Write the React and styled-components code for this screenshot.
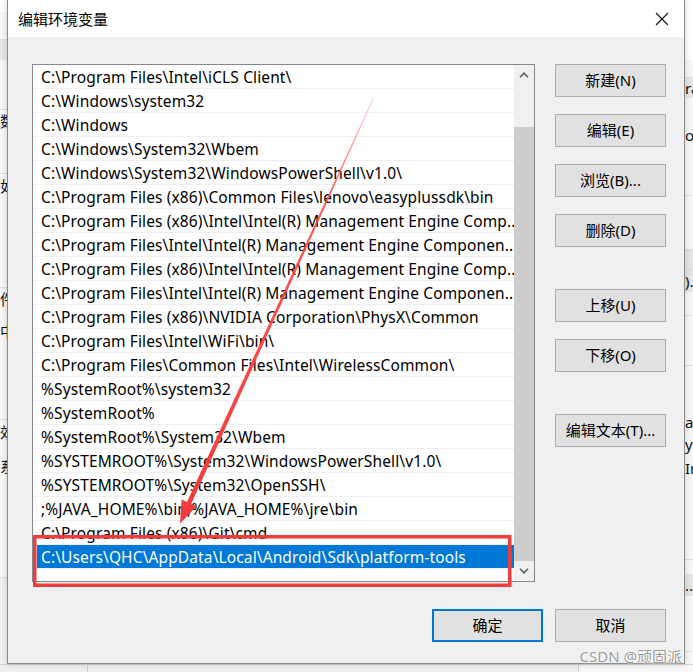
import React from "react";
import styled, { createGlobalStyle } from "styled-components";

const GlobalStyle = createGlobalStyle`
  html, body {
    margin: 0;
    padding: 0;
    background: #f0f0f0;
  }
  body {
    font-family: "Noto Sans", "Noto Sans CJK SC", sans-serif;
    font-size: 15px;
    color: #000;
  }
`;

const paths = [
  "C:\\Program Files\\Intel\\iCLS Client\\",
  "C:\\Windows\\system32",
  "C:\\Windows",
  "C:\\Windows\\System32\\Wbem",
  "C:\\Windows\\System32\\WindowsPowerShell\\v1.0\\",
  "C:\\Program Files (x86)\\Common Files\\lenovo\\easyplussdk\\bin",
  "C:\\Program Files (x86)\\Intel\\Intel(R) Management Engine Comp...",
  "C:\\Program Files\\Intel\\Intel(R) Management Engine Componen...",
  "C:\\Program Files (x86)\\Intel\\Intel(R) Management Engine Comp...",
  "C:\\Program Files\\Intel\\Intel(R) Management Engine Componen...",
  "C:\\Program Files (x86)\\NVIDIA Corporation\\PhysX\\Common",
  "C:\\Program Files\\Intel\\WiFi\\bin\\",
  "C:\\Program Files\\Common Files\\Intel\\WirelessCommon\\",
  "%SystemRoot%\\system32",
  "%SystemRoot%",
  "%SystemRoot%\\System32\\Wbem",
  "%SYSTEMROOT%\\System32\\WindowsPowerShell\\v1.0\\",
  "%SYSTEMROOT%\\System32\\OpenSSH\\",
  ";%JAVA_HOME%\\bin;%JAVA_HOME%\\jre\\bin",
  "C:\\Program Files (x86)\\Git\\cmd",
  "C:\\Users\\QHC\\AppData\\Local\\Android\\Sdk\\platform-tools",
];
const selectedIndex = 20;

const sideButtons = [
  { label: "新建(N)" },
  { label: "编辑(E)" },
  { label: "浏览(B)..." },
  { label: "删除(D)" },
  { label: "上移(U)", group: true },
  { label: "下移(O)" },
  { label: "编辑文本(T)...", group: true },
];

// bits of the window behind the dialog that peek out at the edges
const leftBits = [
  { h: 12, bg: "#ffffff" },
  { h: 28, bg: "#f7f7f7", line: true },
  { h: 20, bg: "#e6e6e6", text: "±" },
  { h: 50, bg: "#f7f7f7", line: true },
  { h: 22, bg: "#f7f7f7", text: "数" },
  { h: 42, bg: "#f7f7f7", line: true },
  { h: 24, bg: "#f7f7f7", text: "如" },
  { h: 90, bg: "#f7f7f7", line: true },
  { h: 22, bg: "#f7f7f7", text: "件" },
  { h: 10, bg: "#f7f7f7" },
  { h: 22, bg: "#f7f7f7", text: "中" },
  { h: 78, bg: "#f7f7f7", line: true },
  { h: 24, bg: "#f7f7f7", text: "效" },
  { h: 10, bg: "#f7f7f7" },
  { h: 24, bg: "#f7f7f7", text: "系" },
  { h: 100, bg: "#f7f7f7", line: true },
  { h: 86, bg: "#f0f0f0" },
];

const rightBits = [
  { h: 60, bg: "#ffffff" },
  { h: 18, bg: "#f7f7f7", line: true },
  { h: 20, bg: "#e5e5e5", text: "ra" },
  { h: 26, bg: "#f7f7f7" },
  { h: 22, bg: "#f7f7f7", text: "ov" },
  { h: 50, bg: "#f7f7f7", line: true },
  { h: 54, bg: "#f7f7f7", line: true },
  { h: 20, bg: "#e5e5e5", line: true },
  { h: 22, bg: "#e5e5e5", text: ")." },
  { h: 24, bg: "#f7f7f7", line: true },
  { h: 50, bg: "#f7f7f7", line: true },
  { h: 45, bg: "#f7f7f7" },
  { h: 22, bg: "#f7f7f7", text: "ar" },
  { h: 23, bg: "#f7f7f7", text: "yS" },
  { h: 24, bg: "#f7f7f7", text: "Ir" },
  { h: 80, bg: "#f7f7f7", line: true },
  { h: 14, bg: "#f7f7f7" },
  { h: 22, bg: "#e5e5e5", text: "..." },
  { h: 56, bg: "#f7f7f7", line: true },
];

export default function App() {
  return (
    <>
      <GlobalStyle />
      <Screen>
        <BackStrip $side="left">
          {leftBits.map((b, i) => (
            <BackBit key={i} $h={b.h} $bg={b.bg} $line={b.line} $side="left">
              {b.text && <span>{b.text}</span>}
            </BackBit>
          ))}
        </BackStrip>

        <Dialog>
          <TitleBar>
            <Title>编辑环境变量</Title>
            <CloseButton>
              <svg width="14" height="14" viewBox="0 0 14 14">
                <path d="M1 1 L13 13 M13 1 L1 13" stroke="#111" strokeWidth="1.1" />
              </svg>
            </CloseButton>
          </TitleBar>

          <Body>
            <Main>
              <ListBox>
                <Rows>
                  {paths.map((p, i) => (
                    <Row key={i}>
                      <RowLabel $selected={i === selectedIndex}>{p}</RowLabel>
                    </Row>
                  ))}
                </Rows>
                <ScrollBar>
                  <ScrollArrow>
                    <svg width="10" height="6" viewBox="0 0 10 6">
                      <path d="M1 5.2 L5 1.2 L9 5.2" fill="none" stroke="#606060" strokeWidth="1.6" />
                    </svg>
                  </ScrollArrow>
                  <Track>
                    <Thumb />
                  </Track>
                  <ScrollArrow>
                    <svg width="10" height="6" viewBox="0 0 10 6">
                      <path d="M1 0.8 L5 4.8 L9 0.8" fill="none" stroke="#606060" strokeWidth="1.6" />
                    </svg>
                  </ScrollArrow>
                </ScrollBar>
              </ListBox>

              <SideButtons>
                {sideButtons.map((b) => (
                  <Button key={b.label} $group={b.group}>
                    {b.label}
                  </Button>
                ))}
              </SideButtons>
            </Main>

            <Footer>
              <Button $primary>确定</Button>
              <Button>取消</Button>
            </Footer>
          </Body>
        </Dialog>

        <BackStrip $side="right">
          {rightBits.map((b, i) => (
            <BackBit key={i} $h={b.h} $bg={b.bg} $line={b.line} $side="right">
              {b.text && <span>{b.text}</span>}
            </BackBit>
          ))}
        </BackStrip>

        <BottomStrip>
          <BottomCell $w={87} />
          <BottomCell $w={490} />
          <BottomCell $w={116} $last />
        </BottomStrip>

        <Annotation width="693" height="672" viewBox="0 0 693 672">
          <defs>
            <linearGradient id="shaft" x1="373" y1="99" x2="185" y2="510" gradientUnits="userSpaceOnUse">
              <stop offset="0" stopColor="#ff6b6b" stopOpacity="0.35" />
              <stop offset="0.25" stopColor="#f44" stopOpacity="0.9" />
              <stop offset="1" stopColor="#f23b3b" />
            </linearGradient>
          </defs>
          <rect x="34.75" y="536.75" width="475" height="48.5" fill="none" stroke="#f23b3b" strokeWidth="3.5" />
          <polygon
            points="372.6,98.8 373.4,99.2 191.2,503.9 196.5,506.4 180,523.5 181.6,499.6 187,502"
            fill="url(#shaft)"
          />
        </Annotation>

        <Watermark>CSDN @顽固派</Watermark>
      </Screen>
    </>
  );
}

const Screen = styled.div`
  position: relative;
  width: 693px;
  height: 672px;
  overflow: hidden;
  display: grid;
  grid-template-columns: 7px 678px 8px;
  grid-template-rows: 664px 8px;
`;

const BackStrip = styled.div`
  display: flex;
  flex-direction: column;
  overflow: hidden;
  background: #f7f7f7;
`;

const BackBit = styled.div`
  flex: 0 0 ${(p) => p.$h}px;
  display: flex;
  align-items: center;
  justify-content: ${(p) => (p.$side === "left" ? "flex-end" : "flex-start")};
  background: ${(p) => p.$bg};
  border-bottom: ${(p) => (p.$line ? "1px solid #dcdcdc" : "none")};
  box-sizing: border-box;
  overflow: hidden;
  span {
    flex: 0 0 auto;
    white-space: nowrap;
    font-size: 15px;
    line-height: 1;
    margin-right: ${(p) => (p.$side === "left" ? "-8px" : "0")};
    color: #111;
  }
`;

const BottomStrip = styled.div`
  grid-column: 1 / 4;
  display: flex;
  background: #f0f0f0;
  border-top: 1px solid #d0d0d0;
`;

const BottomCell = styled.div`
  flex: 0 0 ${(p) => p.$w}px;
  border-right: ${(p) => (p.$last ? "none" : "1px solid #cfcfcf")};
  background: ${(p) => (p.$last ? "#f7f7f7" : "#efefef")};
`;

const Dialog = styled.div`
  display: flex;
  flex-direction: column;
  background: #f0f0f0;
  border: 1px solid #8c8c8c;
  border-top: none;
  box-sizing: border-box;
  box-shadow: 0 0 6px rgba(0, 0, 0, 0.18);
  z-index: 1;
`;

const TitleBar = styled.div`
  flex: 0 0 37px;
  display: flex;
  align-items: center;
  justify-content: space-between;
  background: #ffffff;
  padding: 0 15px 0 10px;
`;

const Title = styled.div`
  font-size: 15px;
  line-height: 20px;
`;

const CloseButton = styled.div`
  width: 14px;
  height: 14px;
  display: flex;
`;

const Body = styled.div`
  flex: 1;
  display: flex;
  flex-direction: column;
  padding: 27px 18px 21px 24px;
  gap: 27px;
`;

const Main = styled.div`
  display: flex;
  gap: 20px;
`;

const ListBox = styled.div`
  width: 503px;
  height: 518px;
  box-sizing: border-box;
  border: 1px solid #828790;
  background: #ffffff;
  display: flex;
`;

const Rows = styled.div`
  flex: 1;
  min-width: 0;
  display: flex;
  flex-direction: column;
`;

const Row = styled.div`
  height: 24px;
  box-sizing: border-box;
  border-bottom: 1px solid #f0f0f0;
  padding-left: 4px;
  display: flex;
`;

const RowLabel = styled.div`
  flex: 1;
  min-width: 0;
  padding: 1px 0 0 4px;
  font-size: 15.5px;
  letter-spacing: 0.12px;
  line-height: 22px;
  white-space: nowrap;
  overflow: hidden;
  color: ${(p) => (p.$selected ? "#ffffff" : "#000000")};
  background: ${(p) => (p.$selected ? "#0078d7" : "transparent")};
`;

const ScrollBar = styled.div`
  flex: 0 0 20px;
  display: flex;
  flex-direction: column;
  background: #f0f0f0;
`;

const ScrollArrow = styled.div`
  flex: 0 0 20px;
  display: flex;
  align-items: center;
  justify-content: center;
`;

const Track = styled.div`
  flex: 1;
  display: flex;
  flex-direction: column;
  padding-top: 42px;
`;

const Thumb = styled.div`
  flex: 1;
  background: #cdcdcd;
`;

const SideButtons = styled.div`
  display: flex;
  flex-direction: column;
  gap: 17px;
`;

const Button = styled.div`
  width: 111px;
  height: 33px;
  box-sizing: border-box;
  margin-top: ${(p) => (p.$group ? "25px" : "0")};
  padding-bottom: 2px;
  display: flex;
  align-items: center;
  justify-content: center;
  background: #e1e1e1;
  border: ${(p) => (p.$primary ? "2px solid #0078d7" : "1px solid #adadad")};
  font-size: 15px;
  line-height: 20px;
  white-space: nowrap;
`;

const Footer = styled.div`
  display: flex;
  justify-content: flex-end;
  gap: 12px;
`;

const Annotation = styled.svg`
  position: absolute;
  left: 0;
  top: 0;
  z-index: 2;
  pointer-events: none;
`;

const Watermark = styled.div`
  position: absolute;
  right: 11px;
  bottom: 7px;
  z-index: 3;
  font-size: 15px;
  line-height: 18px;
  color: rgba(120, 120, 120, 0.75);
  text-shadow: 0 0 2px #fff, 0 0 1px #fff;
`;
